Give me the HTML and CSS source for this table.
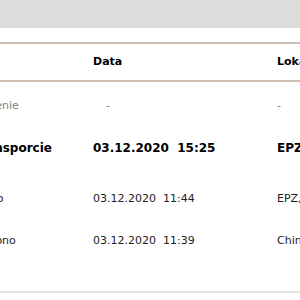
FILE: index.html
```html
<!DOCTYPE html>
<html lang="pl">
<head>
<meta charset="utf-8">
<title>Śledzenie przesyłki</title>
<link rel="stylesheet" href="styles.css">
</head>
<body>
<div class="topbar"></div>
<div class="history">
  <div class="row head">
    <div class="cell">Status</div>
    <div class="cell">Data</div>
    <div class="cell">Lokalizacja</div>
  </div>
  <div class="rows">
    <div class="row muted">
      <div class="cell">Doręczenie</div>
      <div class="cell dash-date">-</div>
      <div class="cell">-</div>
    </div>
    <div class="row current">
      <div class="cell">W transporcie</div>
      <div class="cell">03.12.2020&nbsp;&nbsp;15:25</div>
      <div class="cell">EPZ Warszawa</div>
    </div>
    <div class="row">
      <div class="cell">Wysłano</div>
      <div class="cell">03.12.2020&nbsp;&nbsp;11:44</div>
      <div class="cell">EPZ, Warszawa</div>
    </div>
    <div class="row">
      <div class="cell">Utworzono</div>
      <div class="cell">03.12.2020&nbsp;&nbsp;11:39</div>
      <div class="cell">Chiny</div>
    </div>
  </div>
</div>
</body>
</html>
```
FILE: styles.css
```css
html, body {
  margin: 0;
  padding: 0;
  overflow: hidden;
  background: #ffffff;
}
body {
  font-family: "DejaVu Sans", Verdana, sans-serif;
  font-size: 11px;
  line-height: 14px;
  color: #222222;
  width: 300px;
  height: 300px;
}
.topbar {
  height: 28px;
  background: #dcdcdc;
}
.history {
  margin-top: 14px;
  border-top: 2px solid #cdbfb1;
}
.row {
  display: grid;
  grid-template-columns: 136px 184px 200px;
  margin-left: -43px;
  white-space: nowrap;
  padding: 17px 0 11px;
}
.cell {
  overflow: hidden;
}
.head {
  font-weight: bold;
  color: #000000;
  padding: 0;
  height: 36px;
  align-items: center;
  border-bottom: 2px solid #cdbfb1;
}
.rows {
  padding-bottom: 32px;
  border-bottom: 2px solid #e4e4e4;
}
.muted {
  color: #808080;
}
.dash-date {
  padding-left: 13px;
}
.current {
  font-size: 12px;
  font-weight: bold;
  color: #000000;
  padding-bottom: 20px;
}
```
